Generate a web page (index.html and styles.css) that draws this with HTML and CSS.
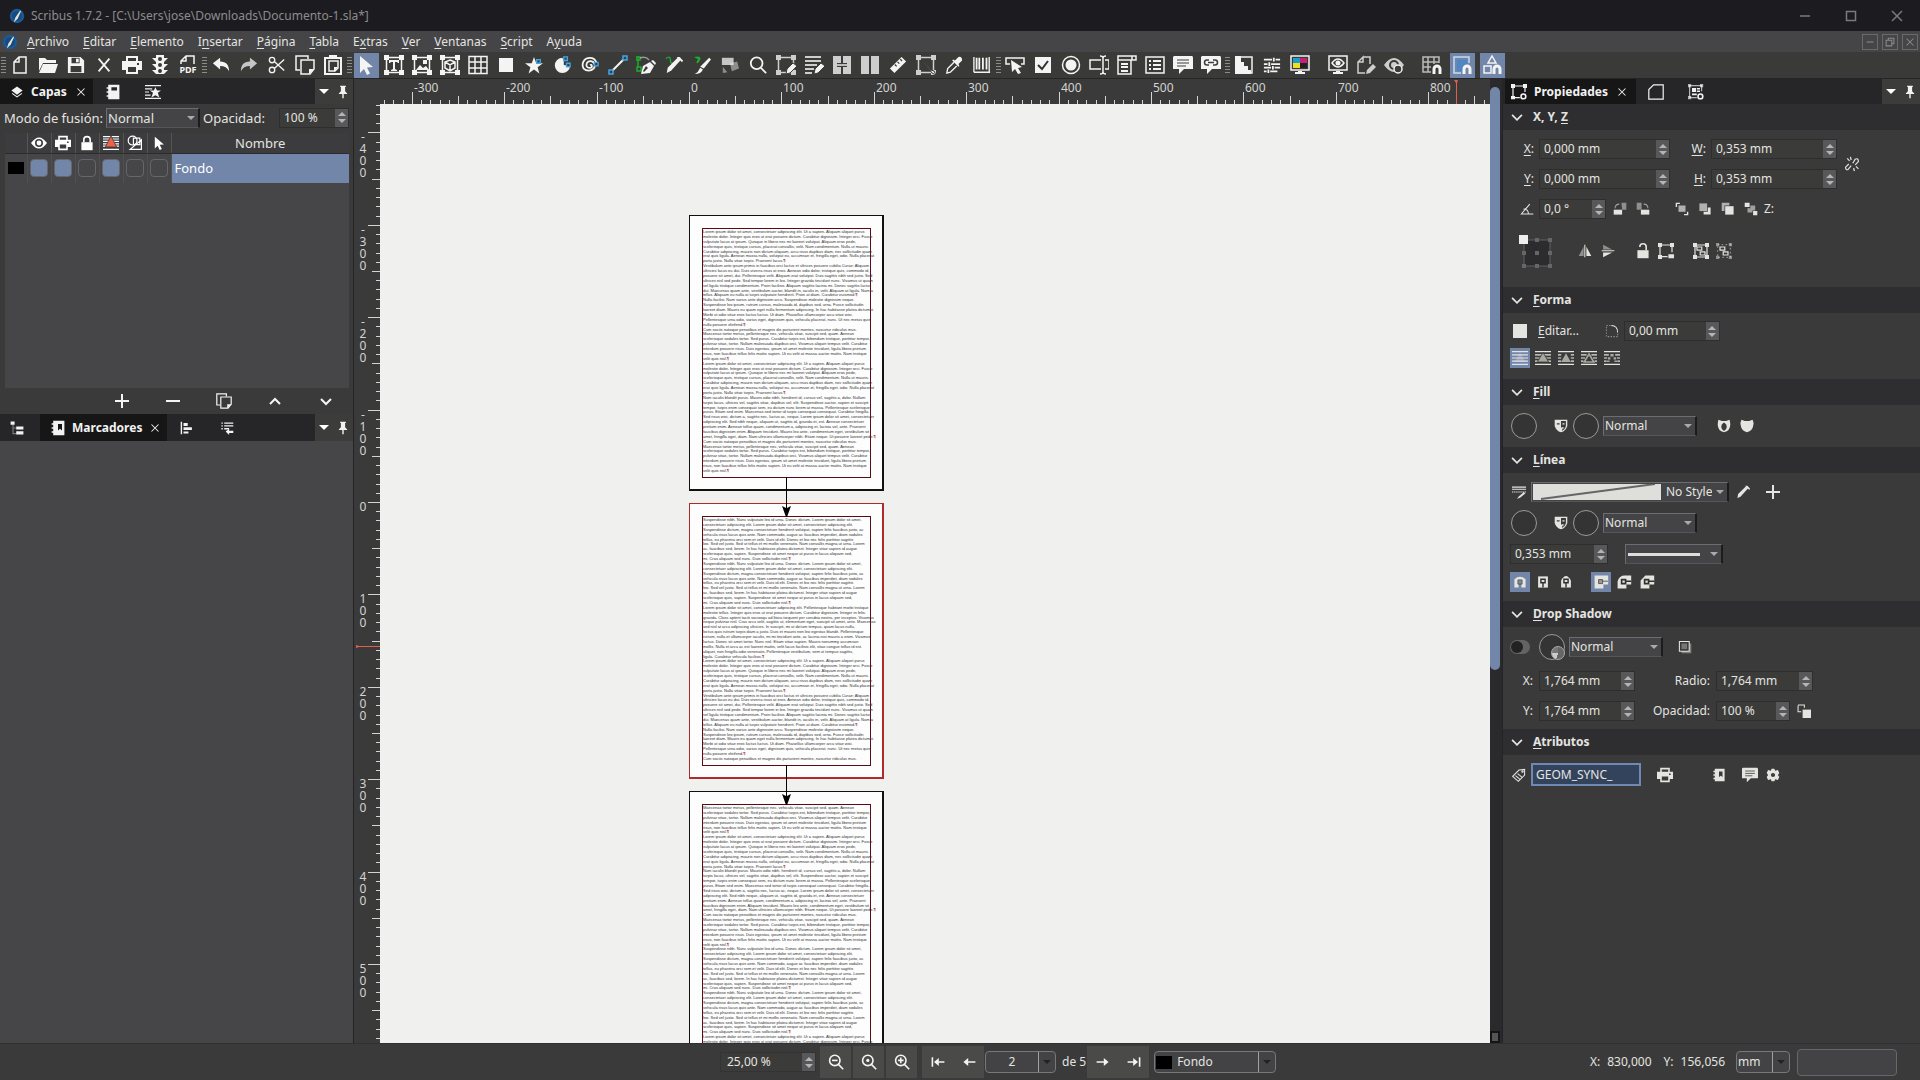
FILE: index.html
```html
<!DOCTYPE html>
<html lang="es">
<head>
<meta charset="utf-8">
<title>Scribus 1.7.2</title>
<link rel="stylesheet" href="styles.css">
</head>
<body>
<svg class="sprite" aria-hidden="true">
  <symbol id="logo" viewBox="0 0 20 20"><circle cx="10" cy="10" r="9" fill="#1b5a96"/><circle cx="10" cy="10" r="6" fill="#174a80"/><path d="M14 3L8 12l-2 6 5-5 4-9z" fill="#e8e4d0"/></symbol>
  <symbol id="new" viewBox="0 0 20 20"><path class="s" d="M9 2h7v16H4V7zM9 2v5H4"/></symbol>
  <symbol id="open" viewBox="0 0 20 20"><path d="M1 3h6l2 2h9v3H5L1 16zM5 9h15l-3 9H1z"/></symbol>
  <symbol id="save" viewBox="0 0 20 20"><path fill-rule="evenodd" d="M1 1h14l4 4v14H1zM5 2v6h9V2zM4 11v7h12v-7z"/><path d="M10 3h3v4h-3z"/></symbol>
  <symbol id="close" viewBox="0 0 20 20"><path class="s2" d="M4 3l12 14M16 3L4 17"/></symbol>
  <symbol id="print" viewBox="0 0 20 20"><path fill-rule="evenodd" d="M4 1h12v5h4v9h-4v4H4v-4H0V6h4zM6 3v3h8V3zM6 12v5h8v-5zM15 8v2h2V8z"/></symbol>
  <symbol id="lights" viewBox="0 0 20 20"><path fill-rule="evenodd" d="M6 0h8v3h4l-4 4v2h4l-4 4v2h4l-4 4H6l-4-4h4v-2L2 9h4V7L2 3h4zM10 2a2 2 0 100 4 2 2 0 000-4zM10 8a2 2 0 100 4 2 2 0 000-4zM10 14a2 2 0 100 4 2 2 0 000-4z"/></symbol>
  <symbol id="pdf" viewBox="0 0 20 20"><path class="s" d="M3 9V6l5-5h8v8M8 1v5H3"/><text x="10" y="18" font-size="9" font-weight="700" text-anchor="middle">PDF</text></symbol>
  <symbol id="undo" viewBox="0 0 20 20"><path d="M1 8l8-6v4c7 0 10 4 10 11-2-4-5-6-10-6v4z"/></symbol>
  <symbol id="redo" viewBox="0 0 20 20"><path opacity=".75" d="M19 8l-8-6v4C4 6 1 10 1 17c2-4 5-6 10-6v4z"/></symbol>
  <symbol id="cut" viewBox="0 0 20 20"><path class="s" d="M7 6l11 10M7 14L18 4"/><circle class="s" cx="4.500" cy="4.500" r="3"/><circle class="s" cx="4.500" cy="15.500" r="3"/></symbol>
  <symbol id="copy" viewBox="0 0 20 20"><path class="s" d="M5 15H1V1h12v3M6 5h13v9l-4 5H6z"/><path d="M19 14h-5v5z"/></symbol>
  <symbol id="paste" viewBox="0 0 20 20"><path class="s2" d="M2 3h16v16H2z"/><path d="M6 0h8v4H6z"/><path class="s" d="M6 6h9v7l-3 3H6z"/><path d="M15 12h-4v5z"/></symbol>
  <symbol id="arrow" viewBox="0 0 20 20"><path d="M4 1l13 11-6 .5 3 6-3 1.500-3-6-4 4z"/></symbol>
  <symbol id="frame" viewBox="0 0 20 20"><path class="s" d="M2.500 2.500h15v15h-15z"/><path d="M0 0h5v5H0zM15 0h5v5h-5zM0 15h5v5H0zM15 15h5v5h-5z"/></symbol>
  <symbol id="text" viewBox="0 0 20 20"><use href="#frame"/><path d="M5 5h10v3h-1l-1-1h-2v7l2 1v1H7v-1l2-1V7H7L6 8H5z"/></symbol>
  <symbol id="image" viewBox="0 0 20 20"><use href="#frame"/><path d="M4 15l4-5 3 3 3-2 3 4zM11 5h4v4h-4z"/></symbol>
  <symbol id="render" viewBox="0 0 20 20"><use href="#frame"/><path class="s" d="M10 5l5 2v6l-5 3-5-3V7zM5 7l5 3 5-3M10 10v6"/></symbol>
  <symbol id="table" viewBox="0 0 20 20"><path class="s" d="M1 1.500h18v17H1zM1 7h18M1 13h18M7 1v18M13 1v18"/></symbol>
  <symbol id="square" viewBox="0 0 20 20"><path d="M3 3h14v14H3z"/></symbol>
  <symbol id="star" viewBox="0 0 20 20"><path d="M10 1l2.500 7H20l-6 4.500 2 7-6-4.500-6 4.500 2-7L0 8h7.500z"/><path class="b" d="M13 4h4v4h-4z"/></symbol>
  <symbol id="pie" viewBox="0 0 20 20"><path d="M10 2a8.500 8.500 0 109 9l-7-1V4z"/><path class="b" d="M12 1h4v4h-4zM15 8h4v4h-4z"/></symbol>
  <symbol id="spiral" viewBox="0 0 20 20"><path class="s2" d="M10 10c2-1 3 2 1 3-3 1-5-1-5-3 0-3 3-5 6-4 4 1 4 6 2 8-3 3-8 3-11 0-3-5 0-12 7-12 3 0 6 2 7 5"/><path class="b" d="M15 7h4v4h-4z"/></symbol>
  <symbol id="line" viewBox="0 0 20 20"><path class="s2" d="M4 16L16 4"/><path class="b" d="M15 1h4v4h-4zM1 15h4v4H1z"/></symbol>
  <symbol id="pen" viewBox="0 0 20 20"><path class="g" d="M2 1v11M1 12h4v4H1zM0 2h4v3H0z"/><path class="s" opacity=".5" d="M4 3q6-2 9 2"/><path fill-rule="evenodd" d="M5 19l2-8 7-4 4 4-4 7zM10 11l2 2-4 4-1-1z"/><path d="M15 6l4 4 1-2-3-3z"/></symbol>
  <symbol id="pencil" viewBox="0 0 20 20"><path d="M2 19l1-6L14 2q3-2 4 2L7 16z"/><path d="M13 1l6 6 1-2-4-4z"/></symbol>
  <symbol id="freehand" viewBox="0 0 20 20"><path class="g" d="M1 3q5-4 5 1t3 4"/><use href="#pencil"/></symbol>
  <symbol id="brush" viewBox="0 0 20 20"><path fill="#1faa2e" d="M1 1q9-2 7 3t-4 4q0-4 2-4z"/><path d="M18 2l2 2-8 10-4-2zM8 13l3 2q-2 5-9 5 4-2 6-7z"/></symbol>
  <symbol id="rotate" viewBox="0 0 20 20"><path opacity=".75" d="M1 2h13v8H1z"/><path opacity=".45" d="M10 8l8-2 2 8-8 3zM2 12l5 6-5 1z"/></symbol>
  <symbol id="zoom" viewBox="0 0 20 20"><circle class="s2" cx="8.500" cy="8" r="6.500"/><path class="s2" d="M13 13l6 6"/></symbol>
  <symbol id="editframe" viewBox="0 0 20 20"><use href="#frame" opacity=".8"/><path stroke="#3c3c3c" d="M10 19l1-5 6-6 4 3-7 7z"/></symbol>
  <symbol id="story" viewBox="0 0 20 20"><path class="s2" d="M1 2h16M1 6h16M1 10h12M1 14h9M1 18h7" opacity=".8"/><path stroke="#3c3c3c" d="M10 19l1-5 6-6 4 3-7 7z"/></symbol>
  <symbol id="link" viewBox="0 0 20 20"><path opacity=".8" d="M1 1h8v7H5v4h4v7H1zM11 1h8v18h-8v-7h4V8h-4z"/><path opacity=".7" d="M5 9h10v2H5z"/></symbol>
  <symbol id="unlink" viewBox="0 0 20 20"><path opacity=".8" d="M1 1h8v18H1zM11 1h8v18h-8z"/></symbol>
  <symbol id="ruler" viewBox="0 0 20 20"><path fill-rule="evenodd" d="M1 14L14 1l5 5L6 19zM6 10l2 2 1-1-2-2zM9 7l2 2 1-1-2-2zM12 4l2 2 1-1-2-2z"/></symbol>
  <symbol id="props" viewBox="0 0 20 20"><use href="#frame" opacity=".8"/><path stroke="#3c3c3c" d="M7 6l8 9 3 1 2 4-4-2-2-3z"/></symbol>
  <symbol id="dropper" viewBox="0 0 20 20"><path d="M11 5l4-4q4-1 4 4l-4 4 1 2-1 1-7-7 1-1z"/><path class="s" d="M10 7l-7 7-1 5 4-1 7-7"/></symbol>
  <symbol id="barcode" viewBox="0 0 20 20"><path class="s2" d="M4 2v13M7 2v13M11 2v13M15 2v13"/><path class="s" d="M1 1v17M18 1v17M1 18h18"/></symbol>
  <symbol id="pushbtn" viewBox="0 0 20 20"><path class="s" d="M5 9H1V3h18v6h-3"/><path d="M6 5l11 7-4 1 3 5-3 1-3-5-3 3z"/></symbol>
  <symbol id="check" viewBox="0 0 20 20"><path d="M2 2h16v16H2z"/><path fill="none" stroke="#303030" stroke-width="2" d="M5 10l4 4 6-8"/></symbol>
  <symbol id="radio" viewBox="0 0 20 20"><circle class="s" cx="10" cy="10" r="8.500"/><circle cx="10" cy="10" r="5.500"/></symbol>
  <symbol id="field" viewBox="0 0 20 20"><path class="s" d="M12 5H1v9h11M16 5h4v9h-4M14 2v16M11 1q3 0 3 2 0-2 3-2M11 19q3 0 3-2 0 2 3 2"/></symbol>
  <symbol id="combo" viewBox="0 0 20 20"><path class="s" d="M1 1h18v4H1zM1 5h13v14H1zM15 1v4"/><path class="s2" d="M4 9h7M4 12h7M4 16h7"/></symbol>
  <symbol id="list" viewBox="0 0 20 20"><path class="s" d="M1 2h18v16H1z"/><path class="s2" d="M4 6h2M8 6h8M4 10h2M8 10h8M4 14h2M8 14h8"/></symbol>
  <symbol id="note" viewBox="0 0 20 20"><path d="M1 1h18q1 0 1 2v11h-9l-5 5v-5H0V2z"/><path stroke="#3c3c3c" d="M4 5h12M4 8h12M4 11h9"/></symbol>
  <symbol id="noteln" viewBox="0 0 20 20"><path d="M1 1h18q1 0 1 2v11h-9l-5 5v-5H0V2z"/><path fill="none" stroke="#3c3c3c" stroke-width="1.500" d="M8 5H6a2 2 0 000 5h2M12 5h2a2 2 0 010 5h-2M7 7.500h6"/></symbol>
  <symbol id="contour" viewBox="0 0 20 20"><path class="s" d="M2 2h16v16H2z"/><path d="M1 1h6v6h3v4h4v4h3v4H1z"/></symbol>
  <symbol id="sliders" viewBox="0 0 20 20"><path class="s2" d="M1 4h9M14 4h5M1 9h4M9 9h10M1 13h8M13 13h6M1 17h3M8 17h8M12 2v4M7 7v4M11 11v4M6 15v4"/></symbol>
  <symbol id="cmyk" viewBox="0 0 20 20"><path class="s" d="M1 1h18v14H1z"/><path fill="#14a0c8" d="M3 3h7v5H3z"/><path fill="#c81e78" d="M10 3h7v5h-7z"/><path fill="#f0e020" d="M3 8h7v5H3z"/><path fill="#202020" d="M10 8h7v5h-7z"/><path d="M8 16h4v1h3v2H5v-2h3z"/></symbol>
  <symbol id="eye" viewBox="0 0 20 20"><path fill-rule="evenodd" d="M0 10q10-14 20 0-10 14-20 0zM10 5a5 5 0 100 10 5 5 0 000-10z"/><circle cx="10" cy="10" r="3"/></symbol>
  <symbol id="preview" viewBox="0 0 20 20"><path class="s" d="M1 1h18v14H1zM4 8q6-8 12 0-6 8-12 0z"/><circle cx="10" cy="8" r="2.500"/><path d="M8 16h4v1h3v2H5v-2h3z"/></symbol>
  <symbol id="editpage" viewBox="0 0 20 20"><path class="s" opacity=".8" d="M7 2h7v7M9 18H2V7l5-5v5H2"/><path opacity=".8" d="M10 19l1-4 6-6 3 3-6 6z"/></symbol>
  <symbol id="eyeedit" viewBox="0 0 20 20"><use href="#eye" opacity=".8"/><circle cx="14" cy="14" r="4.500" fill="#3c3c3c"/><circle class="s" cx="14" cy="14" r="4"/></symbol>
  <symbol id="magnet" viewBox="0 0 20 20"><path fill="none" stroke="currentColor" stroke-width="3" d="M12 19v-5a3 3 0 016 0v5"/></symbol>
  <symbol id="snapgrid" viewBox="0 0 20 20"><path class="s" opacity=".7" d="M9 17H1V2h16v6M1 7h16M1 12h8M6 2v15M12 2v7"/><use href="#magnet"/></symbol>
  <symbol id="snapguide" viewBox="0 0 20 20"><path fill="#4f86c4" d="M5 5h10v5l-5 6H5z"/><path fill="none" stroke="#c4dcf4" stroke-width="1.500" d="M9 18H2V2h15v6"/><use href="#magnet"/></symbol>
  <symbol id="snapobj" viewBox="0 0 20 20"><path class="s" d="M10 1l4 7H6zM2 11h7v7H2z"/><use href="#magnet"/></symbol>
  <symbol id="layers" viewBox="0 0 20 20"><path d="M10 2l8 6-8 6-8-6z"/><path class="s" d="M3 12l7 5 7-5"/></symbol>
  <symbol id="book" viewBox="0 0 20 20"><path fill-rule="evenodd" d="M4 1h14v18H4v-3H2v-2h2v-3H2V9h2V6H2V4h2zM8 4v4h7V4z"/></symbol>
  <symbol id="bookmark" viewBox="0 0 20 20"><path fill-rule="evenodd" d="M4 1h14v18H4v-3H2v-2h2v-3H2V9h2V6H2V4h2zM10 5v8l2.500-2 2.500 2V5z"/></symbol>
  <symbol id="styles" viewBox="0 0 20 20"><path class="s" d="M0 2h20M0 6h9M0 10h5M0 14h7M0 18h20"/><path d="M13 4l2 4h5l-4 3 2 6-5-3-5 3 2-6-4-3h5z"/></symbol>
  <symbol id="pin" viewBox="0 0 20 20"><path d="M6 1h8v2h-1v6l3 3v1h-5v6H9v-6H4v-1l3-3V3H6z"/></symbol>
  <symbol id="lock" viewBox="0 0 20 20"><path d="M3 9h14v10H3z"/><path class="s2" d="M6 9V6a4 4 0 018 0v3"/></symbol>
  <symbol id="unlock" viewBox="0 0 20 20"><path d="M3 9h14v10H3z"/><path class="s2" d="M6 5a4 4 0 018 0v4"/></symbol>
  <symbol id="flowred" viewBox="0 0 20 20"><path class="s" d="M0 2h20M0 5h20M0 8h20M0 11h20M0 14h20M0 18h20"/><path fill="#f0604a" stroke="#3c3c3e" d="M10 1l7 14H3z"/></symbol>
  <symbol id="flow" viewBox="0 0 20 20"><path class="s" d="M0 2h20M0 6h20M0 10h20M0 14h20M0 18h20"/><path fill="#a8a8a0" stroke="#3a3a3a" d="M10 3l7 12H3z"/></symbol>
  <symbol id="flowoff" viewBox="0 0 20 20"><path fill="#98a0b8" d="M10 3l7 12H3z"/><path class="s" d="M0 2h20M0 6h20M0 10h20M0 14h20M0 18h20"/></symbol>
  <symbol id="flow2" viewBox="0 0 20 20"><path class="s" d="M0 2h20M0 6h4M16 6h4M0 10h4M16 10h4M0 14h4M16 14h4M0 18h20"/><path fill="#a8a8a0" d="M10 4l6 11H4z"/></symbol>
  <symbol id="flow3" viewBox="0 0 20 20"><path class="s" d="M0 2h20M0 6h7M13 6h7M0 10h5M15 10h5M0 14h3M17 14h3M0 18h20"/><path fill="none" stroke="#a8a8a0" stroke-width="2" d="M10 5l6 10H4z"/></symbol>
  <symbol id="flow4" viewBox="0 0 20 20"><path class="s" d="M0 2h20M0 6h6M14 6h6M0 10h4M16 10h4M0 14h3M17 14h3M0 18h20"/><path fill="#a8a8a0" d="M8 5h4v3H8zM5 9h3v3H5zM12 9h3v3h-3zM3 13h4v2H3zM13 13h4v2h-4z"/></symbol>
  <symbol id="outline" viewBox="0 0 20 20"><circle class="s" cx="7" cy="7" r="5.500"/><path class="s" d="M8 4h8v8H8zM4 18h14V6z"/></symbol>
  <symbol id="plus" viewBox="0 0 20 20"><path class="s2" d="M10 3v14M3 10h14"/></symbol>
  <symbol id="minus" viewBox="0 0 20 20"><path class="s2" d="M3 10h14"/></symbol>
  <symbol id="up" viewBox="0 0 20 20"><path class="s2" d="M5 13l5-5 5 5"/></symbol>
  <symbol id="down" viewBox="0 0 20 20"><path class="s2" d="M5 8l5 5 5-5"/></symbol>
  <symbol id="chev" viewBox="0 0 20 20"><path fill="none" stroke="currentColor" stroke-width="2.500" d="M3 7l7 7 7-7"/></symbol>
  <symbol id="tree" viewBox="0 0 20 20"><path d="M2 2h5v4H2zM9 8h9v4H9zM9 14h9v4H9z"/><path class="s" opacity=".4" d="M5 6v11h4M5 10h4"/></symbol>
  <symbol id="align" viewBox="0 0 20 20"><path d="M1 1h2v18H1zM5 3h6v4H5zM5 9h12v4H5zM5 15h7v3H5z"/></symbol>
  <symbol id="indent" viewBox="0 0 20 20"><path class="s2" d="M2 3h2M6 3h13M2 7h2M6 7h13M2 11h2M6 11h7"/><path d="M8 15l5-4v3h6v3h-6v3z"/></symbol>
  <symbol id="gearframe" viewBox="0 0 20 20"><path class="s" d="M2.500 17V2.500h15V10M3 17h8"/><path d="M0 0h5v5H0zM15 0h5v5h-5zM0 15h5v4H0z"/><circle cx="15.500" cy="15.500" r="3" fill="none" stroke="currentColor" stroke-width="2"/></symbol>
  <symbol id="page" viewBox="0 0 20 20"><path class="s" d="M7 1h12v18H1V7z"/></symbol>
  <symbol id="textprops" viewBox="0 0 20 20"><path class="s" opacity=".7" d="M2 17V2h15v7M2 17h9"/><path opacity=".7" d="M0 0h4v4H0zM15 0h4v4h-4zM0 15h4v4H0z"/><path d="M5 5h5v5H5zM11 5h4v2h-4zM11 8h4v2h-4zM5 12h6v2H5z"/><circle cx="15.500" cy="15.500" r="3" fill="none" stroke="currentColor" stroke-width="2"/></symbol>
  <symbol id="broken" viewBox="0 0 20 20"><path class="s" d="M9 12l-4 5q-3 1-3-3l4-4M11 9l3-5q4-2 4 3l-4 4M4 3l3 3M8 1l1 4M12 15l1 4M15 13l3 3"/></symbol>
  <symbol id="angle" viewBox="0 0 20 20"><path class="s" d="M14 3L2 17h17M5 10q7 0 7 7"/></symbol>
  <symbol id="rotl" viewBox="0 0 20 20"><path d="M1 11h12v7H1z"/><path opacity=".5" d="M12 1h7v10h-6z"/><path class="s" opacity=".6" d="M3 9q0-6 6-6"/></symbol>
  <symbol id="rotr" viewBox="0 0 20 20"><path d="M7 11h12v7H7z"/><path opacity=".5" d="M1 1h7v10H1z"/><path class="s" opacity=".6" d="M17 9q0-6-6-6"/></symbol>
  <symbol id="z1" viewBox="0 0 20 20"><path d="M1 1h6v2H3v4H1zM13 17h4v-3h2v5h-6z"/><path opacity=".7" d="M5 5h10v9H5z"/></symbol>
  <symbol id="z2" viewBox="0 0 20 20"><path d="M14 8h4v10H8v-4h6z"/><path opacity=".7" d="M2 2h11v11H2z"/></symbol>
  <symbol id="z3" viewBox="0 0 20 20"><path opacity=".7" d="M1 1h11v4H5v8H1z"/><path d="M6 6h12v12H6z"/></symbol>
  <symbol id="z4" viewBox="0 0 20 20"><path d="M1 1h7v6H1zM13 13h6v6h-6z"/><path opacity=".6" d="M9 5h7v7h-4v3H5V9h4z"/></symbol>
  <symbol id="refpoint" viewBox="0 0 34 34"><path fill="#2c2c2e" stroke="#606060" d="M6 6h26v26H6z"/><path fill="#666" d="M17 4h4v4h-4zM30 4h4v4h-4zM4 17h4v4H4zM17 17h4v4h-4zM30 17h4v4h-4zM4 30h4v4H4zM17 30h4v4h-4zM30 30h4v4h-4z"/><path fill="#eee" d="M1 1h9v9H1z"/></symbol>
  <symbol id="fliph" viewBox="0 0 20 20"><path opacity=".5" d="M8 4v13H1z"/><path d="M12 4v13h7zM9 1h1.500v18H9z"/></symbol>
  <symbol id="flipv" viewBox="0 0 20 20"><path opacity=".5" d="M3 8h13L3 1z"/><path d="M3 12h13L3 19zM1 9h18v1.500H1z"/></symbol>
  <symbol id="locksize" viewBox="0 0 20 20"><path class="s" d="M2.500 2.500h15v9M2.500 3v14H12"/><path d="M0 0h5v5H0zM15 0h5v5h-5zM0 15h5v5H0zM13 14h7v5h-7z"/></symbol>
  <symbol id="group" viewBox="0 0 20 20"><use href="#frame"/><path class="s" d="M5 5h6v4H5zM9 11h6v4H9z"/></symbol>
  <symbol id="ungroup" viewBox="0 0 20 20"><path opacity=".5" d="M0 0h4v4H0zM16 0h4v4h-4zM0 16h4v4H0zM16 16h4v4h-4z"/><path class="s" opacity=".5" stroke-dasharray="2 3" d="M2 2h16v16H2z"/><path class="s" d="M5 5h6v4H5zM9 11h6v4H9z"/></symbol>
  <symbol id="corner" viewBox="0 0 20 20"><path class="s" opacity=".5" stroke-dasharray="2 2" d="M8 2H2v16h16v-6"/><path class="s" d="M9 2q9 0 9 10"/></symbol>
  <symbol id="mask" viewBox="0 0 20 20"><path d="M1 1h18v9q-2 7-9 9-7-2-9-9z"/><path fill="#3a3a3a" d="M4 6h4v2H4zM10 3h7v7q-1 5-6 7l2-5h-3z"/><path d="M12 6h3v2h-3zM11 12h4l-2 2z"/></symbol>
  <symbol id="ringmask" viewBox="0 0 20 20"><path fill-rule="evenodd" d="M2 1l5 2h6l5-2q1 4 1 7 0 9-9 11Q1 17 1 8q0-3 1-7zM10 5q-4 2-4 6t4 6q4-2 4-6t-4-6z"/></symbol>
  <symbol id="solidmask" viewBox="0 0 20 20"><path d="M2 1l5 2h6l5-2q2 4 1 8-1 8-9 10Q2 17 1 9q-1-4 1-8z"/></symbol>
  <symbol id="linestyle" viewBox="0 0 20 20"><path class="s" d="M0 3h20M0 6h20"/><path class="s" stroke-dasharray="2 1" d="M0 10h20"/><path d="M17 10l2 2-7 6-5 2 3-4z"/></symbol>
  <symbol id="cap1" viewBox="0 0 20 20"><path fill-rule="evenodd" d="M2 18V6q8-7 16 0v12h-6v-5H8v5z"/><path fill="#8a8a8a" stroke="#444" d="M7 7h6v6H7z"/></symbol>
  <symbol id="cap2" viewBox="0 0 20 20"><path d="M3 2h14v16H3z"/><path fill="#ddd" stroke="#303030" stroke-width="2" d="M7 6h6v5H7zM10 11v7"/></symbol>
  <symbol id="cap3" viewBox="0 0 20 20"><path d="M3 18V8q7-13 14 0v10z"/><path fill="#ddd" stroke="#303030" stroke-width="2" d="M7 6h6v5H7zM10 11v7"/></symbol>
  <symbol id="join1" viewBox="0 0 20 20"><path d="M2 2h17v11h-6v5H2z"/><path fill="#999" stroke="#444" d="M7 7h5v5H7zM12 9h7"/></symbol>
  <symbol id="join2" viewBox="0 0 20 20"><path d="M2 18V9q2-7 9-7h8v11h-6v5z"/><path fill="#ddd" stroke="#303030" stroke-width="2" d="M7 7h5v5H7zM12 9h7"/></symbol>
  <symbol id="join3" viewBox="0 0 20 20"><path d="M2 18V8l6-6h11v11h-6v5z"/><path fill="#ddd" stroke="#303030" stroke-width="2" d="M7 7h5v5H7zM12 9h7"/></symbol>
  <symbol id="toggle" viewBox="0 0 20 20"><rect x="0" y="3" width="20" height="14" rx="7" fill="#636363"/><circle cx="7" cy="10" r="6" fill="#222"/></symbol>
  <symbol id="shadow" viewBox="0 0 20 20"><path opacity=".4" d="M5 5h14v14H5z"/><path stroke="currentColor" stroke-width="1.500" fill="#3a3a3a" d="M2 2h14v14H2z"/><path fill="#777" d="M5 5h8v8H5z"/></symbol>
  <symbol id="knock" viewBox="0 0 20 20"><path class="s" d="M1.500 1.500h9v4M6 11H1.500v-9"/><path d="M8 8h12v12H8z"/></symbol>
  <symbol id="tag" viewBox="0 0 20 20"><path class="s" d="M10 3l8-1v8l-9 9-8-7zM5 11l6 5M8 8l6 5"/><circle class="s" cx="15" cy="5" r="1"/></symbol>
  <symbol id="gear" viewBox="0 0 20 20"><path fill-rule="evenodd" d="M8 1h4l1 3 4-1 2 4-2 3 2 3-2 4-4-1-1 3H8l-1-3-4 1-2-4 2-3-2-3 2-4 4 1zM10 7a3 3 0 100 6 3 3 0 000-6z"/></symbol>
  <symbol id="zoomout" viewBox="0 0 20 20"><use href="#zoom"/><path class="s2" d="M5 8h7"/></symbol>
  <symbol id="zoomone" viewBox="0 0 20 20"><use href="#zoom"/><circle cx="8.500" cy="8" r="2"/></symbol>
  <symbol id="zoomin" viewBox="0 0 20 20"><use href="#zoom"/><path class="s2" d="M5 8h7M8.500 4.500v7"/></symbol>
  <symbol id="prev" viewBox="0 0 20 20"><path d="M3 10l6-5v4h9v2H9v4z"/></symbol>
  <symbol id="next" viewBox="0 0 20 20"><path d="M17 10l-6-5v4H2v2h9v4z"/></symbol>
  <symbol id="first" viewBox="0 0 20 20"><path d="M2 4h2v12H2zM5 10l6-5v4h7v2h-7v4z"/></symbol>
  <symbol id="last" viewBox="0 0 20 20"><path d="M16 4h2v12h-2zM15 10L9 5v4H2v2h7v4z"/></symbol>
  <symbol id="minimize" viewBox="0 0 20 20"><path class="s" d="M5 10h10"/></symbol>
  <symbol id="maximize" viewBox="0 0 20 20"><path class="s" d="M5.500 5.500h9v9h-9z"/></symbol>
  <symbol id="restore" viewBox="0 0 20 20"><path class="s" d="M4.500 7.500h8v8h-8zM7.500 7V4.500h8v8H13"/></symbol>
  <symbol id="x" viewBox="0 0 20 20"><path class="s" d="M5 5l10 10M15 5L5 15"/></symbol>
</svg>

<header class="titlebar">
  <svg class="i16"><use href="#logo"/></svg>
  <h1>Scribus 1.7.2 - [C:\Users\jose\Downloads\Documento-1.sla*]</h1>
  <div class="wincontrols">
    <button aria-label="Minimizar"><svg class="i20"><use href="#minimize"/></svg></button>
    <button aria-label="Maximizar"><svg class="i20"><use href="#maximize"/></svg></button>
    <button aria-label="Cerrar"><svg class="i20"><use href="#x"/></svg></button>
  </div>
</header>

<nav class="menubar">
  <svg class="i16"><use href="#logo"/></svg>
  <button><u>A</u>rchivo</button><button><u>E</u>ditar</button><button><u>E</u>lemento</button><button>I<u>n</u>sertar</button><button><u>P</u>ágina</button><button><u>T</u>abla</button><button>E<u>x</u>tras</button><button><u>V</u>er</button><button><u>V</u>entanas</button><button><u>S</u>cript</button><button>A<u>y</u>uda</button>
  <div class="subcontrols">
    <button aria-label="Minimizar documento"><svg class="i14"><use href="#minimize"/></svg></button>
    <button aria-label="Restaurar documento"><svg class="i14"><use href="#restore"/></svg></button>
    <button aria-label="Cerrar documento"><svg class="i14"><use href="#x"/></svg></button>
  </div>
</nav>

<div class="toolbar" role="toolbar">
  <span class="handle"></span>
  <button aria-label="Nuevo"><svg class="i20"><use href="#new"/></svg></button>
  <button aria-label="Abrir"><svg class="i20"><use href="#open"/></svg></button>
  <button aria-label="Guardar"><svg class="i18"><use href="#save"/></svg></button>
  <button aria-label="Cerrar"><svg class="i18"><use href="#close"/></svg></button>
  <button aria-label="Imprimir"><svg class="i20"><use href="#print"/></svg></button>
  <button aria-label="Verificar"><svg class="i20"><use href="#lights"/></svg></button>
  <button aria-label="Exportar PDF"><svg class="i20"><use href="#pdf"/></svg></button>
  <span class="handle"></span>
  <button aria-label="Deshacer"><svg class="i18"><use href="#undo"/></svg></button>
  <button aria-label="Rehacer"><svg class="i18"><use href="#redo"/></svg></button>
  <button aria-label="Cortar"><svg class="i18"><use href="#cut"/></svg></button>
  <button aria-label="Copiar"><svg class="i20"><use href="#copy"/></svg></button>
  <button aria-label="Pegar"><svg class="i20"><use href="#paste"/></svg></button>
  <span class="handle"></span>
  <button class="on" aria-label="Seleccionar"><svg class="i20"><use href="#arrow"/></svg></button>
  <button aria-label="Marco de texto"><svg class="i20"><use href="#text"/></svg></button>
  <button aria-label="Marco de imagen"><svg class="i20"><use href="#image"/></svg></button>
  <button aria-label="Marco de render"><svg class="i20"><use href="#render"/></svg></button>
  <button aria-label="Tabla"><svg class="i20"><use href="#table"/></svg></button>
  <button aria-label="Forma"><svg class="i20"><use href="#square"/></svg></button>
  <button aria-label="Polígono"><svg class="i18"><use href="#star"/></svg></button>
  <button aria-label="Arco"><svg class="i18"><use href="#pie"/></svg></button>
  <button aria-label="Espiral"><svg class="i18"><use href="#spiral"/></svg></button>
  <button aria-label="Línea"><svg class="i20"><use href="#line"/></svg></button>
  <button aria-label="Bézier"><svg class="i20"><use href="#pen"/></svg></button>
  <button aria-label="Mano alzada"><svg class="i18"><use href="#freehand"/></svg></button>
  <button aria-label="Caligrafía"><svg class="i18"><use href="#brush"/></svg></button>
  <button aria-label="Rotar"><svg class="i18"><use href="#rotate"/></svg></button>
  <button aria-label="Zoom"><svg class="i18"><use href="#zoom"/></svg></button>
  <button aria-label="Editar marco"><svg class="i20"><use href="#editframe"/></svg></button>
  <button aria-label="Editor de texto"><svg class="i20"><use href="#story"/></svg></button>
  <button aria-label="Enlazar"><svg class="i20"><use href="#link"/></svg></button>
  <button aria-label="Desenlazar"><svg class="i20"><use href="#unlink"/></svg></button>
  <button aria-label="Medir"><svg class="i18"><use href="#ruler"/></svg></button>
  <button aria-label="Copiar propiedades"><svg class="i20"><use href="#props"/></svg></button>
  <button aria-label="Cuentagotas"><svg class="i18"><use href="#dropper"/></svg></button>
  <button aria-label="Código de barras"><svg class="i18"><use href="#barcode"/></svg></button>
  <span class="handle"></span>
  <button aria-label="Botón PDF"><svg class="i20"><use href="#pushbtn"/></svg></button>
  <button aria-label="Casilla PDF"><svg class="i20"><use href="#check"/></svg></button>
  <button aria-label="Radio PDF"><svg class="i20"><use href="#radio"/></svg></button>
  <button aria-label="Campo PDF"><svg class="i20"><use href="#field"/></svg></button>
  <button aria-label="Combo PDF"><svg class="i20"><use href="#combo"/></svg></button>
  <button aria-label="Lista PDF"><svg class="i20"><use href="#list"/></svg></button>
  <button aria-label="Nota PDF"><svg class="i20"><use href="#note"/></svg></button>
  <button aria-label="Enlace PDF"><svg class="i20"><use href="#noteln"/></svg></button>
  <span class="handle"></span>
  <button aria-label="Contorno"><svg class="i20"><use href="#contour"/></svg></button>
  <button aria-label="Ajustes de imagen"><svg class="i18"><use href="#sliders"/></svg></button>
  <button aria-label="Gestión de color"><svg class="i20"><use href="#cmyk"/></svg></button>
  <button class="apart" aria-label="Vista previa"><svg class="i20"><use href="#preview"/></svg></button>
  <button aria-label="Editar en vista previa"><svg class="i20"><use href="#editpage"/></svg></button>
  <button aria-label="Simulación"><svg class="i20"><use href="#eyeedit"/></svg></button>
  <button class="apart" aria-label="Ajustar a rejilla"><svg class="i20"><use href="#snapgrid"/></svg></button>
  <button class="on wide" aria-label="Ajustar a guías"><svg class="i20"><use href="#snapguide"/></svg></button>
  <button class="on wide" aria-label="Ajustar a objetos"><svg class="i20"><use href="#snapobj"/></svg></button>
</div>

<main class="workspace">
  <aside class="left">
    <section class="layers">
      <div class="tabs">
        <div class="tab active"><svg class="i14"><use href="#layers"/></svg>Capas<svg class="i14"><use href="#x"/></svg></div>
        <div class="tab"><svg class="i16"><use href="#book"/></svg></div>
        <div class="tab"><svg class="i16"><use href="#styles"/></svg></div>
        <div class="dock"><span class="tri"></span><svg class="i14"><use href="#pin"/></svg></div>
      </div>
      <div class="blend">
        <label for="mode">Modo de fusión:</label>
        <span class="select w94"><select id="mode"><option>Normal</option></select></span>
        <label for="op">Opacidad:</label>
        <span class="spin w70"><input id="op" value="100 %"><i class="steps"></i></span>
      </div>
      <div class="layerlist">
        <table>
          <thead><tr><th class="color"></th>
            <th><svg class="i16"><use href="#eye"/></svg></th>
            <th><svg class="i16"><use href="#print"/></svg></th>
            <th><svg class="i16"><use href="#lock"/></svg></th>
            <th><svg class="i16"><use href="#flowred"/></svg></th>
            <th><svg class="i16"><use href="#outline"/></svg></th>
            <th><svg class="i14"><use href="#arrow"/></svg></th>
            <th class="name">Nombre</th></tr></thead>
          <tbody><tr>
            <td><span class="swatch"></span></td>
            <td><input type="checkbox" checked aria-label="Visible"></td>
            <td><input type="checkbox" checked aria-label="Imprimible"></td>
            <td><input type="checkbox" aria-label="Bloqueada"></td>
            <td><input type="checkbox" checked aria-label="Flujo"></td>
            <td><input type="checkbox" aria-label="Contorno"></td>
            <td><input type="checkbox" aria-label="Seleccionable"></td>
            <td class="name">Fondo</td>
          </tr></tbody>
        </table>
      </div>
      <div class="layerbtns">
        <button aria-label="Añadir"><svg class="i20"><use href="#plus"/></svg></button>
        <button aria-label="Quitar"><svg class="i20"><use href="#minus"/></svg></button>
        <button aria-label="Duplicar"><svg class="i16"><use href="#copy"/></svg></button>
        <button aria-label="Subir"><svg class="i20"><use href="#up"/></svg></button>
        <button aria-label="Bajar"><svg class="i20"><use href="#down"/></svg></button>
      </div>
    </section>
    <section class="bookmarks">
      <div class="tabs tall">
        <div class="tab tree"><svg class="i16"><use href="#tree"/></svg></div>
        <div class="tab active"><svg class="i16"><use href="#bookmark"/></svg>Marcadores<svg class="i14"><use href="#x"/></svg></div>
        <div class="tab"><svg class="i14"><use href="#align"/></svg></div>
        <div class="tab"><svg class="i14"><use href="#indent"/></svg></div>
        <div class="dock"><span class="tri"></span><svg class="i14"><use href="#pin"/></svg></div>
      </div>
    </section>
  </aside>

  <section class="view">
    <svg class="hruler" id="hruler"></svg>
    <svg class="vruler" id="vruler"></svg>
    <div class="canvas" id="canvas"></div>
    <div class="scroll"><span class="thumb"></span><span class="end"></span></div>
  </section>

  <aside class="right">
    <div class="tabs">
      <div class="tab active"><svg class="i16"><use href="#gearframe"/></svg>Propiedades<svg class="i14"><use href="#x"/></svg></div>
      <div class="tab"><svg class="i16"><use href="#page"/></svg></div>
      <div class="tab"><svg class="i16"><use href="#textprops"/></svg></div>
      <div class="dock"><span class="tri"></span><svg class="i14"><use href="#pin"/></svg></div>
    </div>

    <h2><svg class="i14"><use href="#chev"/></svg><span>X, Y, <u>Z</u></span></h2>
    <div class="body xyz">
      <div class="coords">
        <label for="x"><u>X</u>:</label><span class="spin"><input id="x" value="0,000 mm"><i class="steps"></i></span>
        <label for="w"><u>W</u>:</label><span class="spin"><input id="w" value="0,353 mm"><i class="steps"></i></span>
        <button class="chain" aria-label="Proporción"><svg class="i16"><use href="#broken"/></svg></button>
        <label for="y"><u>Y</u>:</label><span class="spin"><input id="y" value="0,000 mm"><i class="steps"></i></span>
        <label for="h"><u>H</u>:</label><span class="spin"><input id="h" value="0,353 mm"><i class="steps"></i></span>
      </div>
      <div class="row">
        <label class="lead" for="rot"><svg class="i14"><use href="#angle"/></svg></label>
        <span class="spin w67"><input id="rot" value="0,0 °"><i class="steps"></i></span>
        <div class="tools"><button aria-label="Girar a la izquierda"><svg class="i14"><use href="#rotl"/></svg></button><button aria-label="Girar a la derecha"><svg class="i14"><use href="#rotr"/></svg></button></div>
        <div class="tools order"><button aria-label="Al fondo"><svg class="i14"><use href="#z1"/></svg></button><button aria-label="Bajar"><svg class="i14"><use href="#z2"/></svg></button><button aria-label="Subir"><svg class="i14"><use href="#z3"/></svg></button><button aria-label="Al frente"><svg class="i14"><use href="#z4"/></svg></button><span>Z:</span></div>
      </div>
      <div class="row ref">
        <svg class="i34"><use href="#refpoint"/></svg>
        <div class="tools flips"><button aria-label="Voltear horizontal"><svg class="i14"><use href="#fliph"/></svg></button><button aria-label="Voltear vertical"><svg class="i14"><use href="#flipv"/></svg></button></div>
        <div class="tools"><button aria-label="Bloquear"><svg class="i16"><use href="#unlock"/></svg></button><button aria-label="Bloquear tamaño"><svg class="i16"><use href="#locksize"/></svg></button></div>
        <div class="tools"><button aria-label="Agrupar"><svg class="i16"><use href="#group"/></svg></button><button aria-label="Desagrupar"><svg class="i16"><use href="#ungroup"/></svg></button></div>
      </div>
    </div>

    <h2><svg class="i14"><use href="#chev"/></svg><span><u>F</u>orma</span></h2>
    <div class="body forma">
      <div class="row">
        <button class="icon" aria-label="Forma"><svg class="i20"><use href="#square"/></svg></button>
        <button class="edit"><u>E</u>ditar...</button>
        <label for="corn" class="cornlabel"><svg class="i14"><use href="#corner"/></svg></label>
        <span class="spin w96"><input id="corn" value="0,00 mm"><i class="steps"></i></span>
      </div>
      <div class="tools">
        <button class="on" aria-label="Sin flujo"><svg class="i16"><use href="#flowoff"/></svg></button>
        <button aria-label="Flujo por marco"><svg class="i16"><use href="#flow"/></svg></button>
        <button aria-label="Flujo por caja"><svg class="i16"><use href="#flow2"/></svg></button>
        <button aria-label="Flujo por contorno"><svg class="i16"><use href="#flow3"/></svg></button>
        <button aria-label="Flujo por recorte"><svg class="i16"><use href="#flow4"/></svg></button>
      </div>
    </div>

    <h2><svg class="i14"><use href="#chev"/></svg><span><u>F</u>ill</span></h2>
    <div class="body fill">
      <div class="row">
        <button class="disc" aria-label="Color"></button>
        <svg class="i14 maskicon"><use href="#mask"/></svg>
        <button class="disc" aria-label="Máscara"></button>
        <span class="select w94"><select aria-label="Modo de relleno"><option>Normal</option></select></span>
        <div class="tools rules"><button aria-label="Par-impar"><svg class="i14"><use href="#ringmask"/></svg></button><button aria-label="No cero"><svg class="i14"><use href="#solidmask"/></svg></button></div>
      </div>
    </div>

    <h2><svg class="i14"><use href="#chev"/></svg><span><u>L</u>ínea</span></h2>
    <div class="body linea">
      <div class="row style">
        <svg class="i14"><use href="#linestyle"/></svg>
        <span class="select stylebox"><svg class="sample" viewBox="0 0 128 16"><path fill="#dededa" d="M0 0h128v16H0z"/><path stroke="#666" stroke-width="2" d="M8 15L122 0"/></svg><select aria-label="Estilo de línea"><option>No Style</option></select></span>
        <div class="tools"><button aria-label="Editar estilo"><svg class="i14"><use href="#pencil"/></svg></button></div>
        <div class="tools"><button aria-label="Añadir estilo"><svg class="i20"><use href="#plus"/></svg></button></div>
      </div>
      <div class="row">
        <button class="disc" aria-label="Color de línea"></button>
        <svg class="i14 maskicon"><use href="#mask"/></svg>
        <button class="disc" aria-label="Máscara de línea"></button>
        <span class="select w94"><select aria-label="Modo de línea"><option>Normal</option></select></span>
      </div>
      <div class="row width">
        <span class="spin w98"><input aria-label="Grosor" value="0,353 mm"><i class="steps"></i></span>
        <span class="select dash w98"><select aria-label="Tipo de trazo"><option></option></select></span>
      </div>
      <div class="row ends">
        <div class="tools"><button class="on" aria-label="Extremo plano"><svg class="i14"><use href="#cap1"/></svg></button><button aria-label="Extremo cuadrado"><svg class="i14"><use href="#cap2"/></svg></button><button aria-label="Extremo redondo"><svg class="i14"><use href="#cap3"/></svg></button></div>
        <div class="tools"><button class="on" aria-label="Unión en inglete"><svg class="i16"><use href="#join1"/></svg></button><button aria-label="Unión redonda"><svg class="i16"><use href="#join2"/></svg></button><button aria-label="Unión biselada"><svg class="i16"><use href="#join3"/></svg></button></div>
      </div>
    </div>

    <h2><svg class="i14"><use href="#chev"/></svg><span><u>D</u>rop Shadow</span></h2>
    <div class="body shadow">
      <div class="row">
        <button class="icon" aria-label="Activar sombra"><svg class="i20"><use href="#toggle"/></svg></button>
        <button class="disc drop" aria-label="Color de sombra"></button>
        <span class="select w94"><select aria-label="Modo de sombra"><option>Normal</option></select></span>
        <svg class="i14 erase"><use href="#shadow"/></svg>
      </div>
      <div class="shgrid">
        <label for="sx">X:</label><span class="spin"><input id="sx" value="1,764 mm"><i class="steps"></i></span>
        <label for="sr">Radio:</label><span class="spin"><input id="sr" value="1,764 mm"><i class="steps"></i></span>
        <label for="sy">Y:</label><span class="spin"><input id="sy" value="1,764 mm"><i class="steps"></i></span>
        <label for="so">Opacidad:</label><div class="row"><span class="spin w74"><input id="so" value="100 %"><i class="steps"></i></span><svg class="i14"><use href="#knock"/></svg></div>
      </div>
    </div>

    <h2><svg class="i14"><use href="#chev"/></svg><span><u>A</u>tributos</span></h2>
    <div class="body attrs">
      <div class="row">
        <label for="attr"><svg class="i14"><use href="#tag"/></svg></label>
        <input id="attr" value="GEOM_SYNC_">
        <div class="tools printer"><button aria-label="Imprimible"><svg class="i16"><use href="#print"/></svg></button></div>
        <div class="tools marks"><button aria-label="Marcador PDF"><svg class="i14"><use href="#bookmark"/></svg></button></div>
        <div class="tools"><button aria-label="Anotación"><svg class="i16"><use href="#note"/></svg></button><button aria-label="Opciones"><svg class="i14"><use href="#gear"/></svg></button></div>
      </div>
    </div>
  </aside>
</main>

<footer class="statusbar">
  <span class="spin w96"><input aria-label="Zoom" value="25,00 %"><i class="steps"></i></span>
  <div class="btns zooms"><button aria-label="Alejar"><svg class="i16"><use href="#zoomout"/></svg></button><button aria-label="100 %"><svg class="i16"><use href="#zoomone"/></svg></button><button aria-label="Acercar"><svg class="i16"><use href="#zoomin"/></svg></button></div>
  <div class="btns"><button aria-label="Primera"><svg class="i16"><use href="#first"/></svg></button><button aria-label="Anterior"><svg class="i16"><use href="#prev"/></svg></button></div>
  <span class="flat pg"><select id="pg"><option>2</option></select></span>
  <label for="pg">de 5</label>
  <div class="btns"><button aria-label="Siguiente"><svg class="i16"><use href="#next"/></svg></button><button aria-label="Última"><svg class="i16"><use href="#last"/></svg></button></div>
  <span class="flat layer"><span class="swatch"></span><select aria-label="Capa"><option>Fondo</option></select></span>
  <div class="pos"><span>X:</span><span>830,000</span><span class="second">Y:</span><span>156,056</span>
    <span class="flat unit"><select aria-label="Unidad"><option>mm</option></select></span>
    <span class="msg"></span></div>
</footer>
<script src="app.js"></script>
</body>
</html>
```
FILE: styles.css
```css
* { box-sizing: border-box; }

:root {
  --panel: #3a3a3a;
  --light: #464648;
  --head: #2e2e30;
  --tabbar: #262628;
  --active: #161617;
  --accent: #7286aa;
  --line: #6a6a6e;
  --fg: #e4e4e0;
}

body {
  margin: 0;
  height: 100vh;
  display: flex;
  flex-direction: column;
  overflow: hidden;
  background: var(--panel);
  color: var(--fg);
  font: 12px/16px "Noto Sans", "Open Sans", sans-serif;
}

button, input, select { font: inherit; color: inherit; }
button { border: 0; padding: 0; background: none; display: grid; place-items: center; }
u { text-underline-offset: 2px; }

/* icons */
.sprite { display: none; }
svg { flex: none; fill: currentColor; display: block; }
.s { fill: none; stroke: currentColor; stroke-width: 1.5px; }
.s2 { fill: none; stroke: currentColor; stroke-width: 2px; }
.b { fill: #26465f; stroke: #4aa3dc; stroke-width: 1.5px; }
.g { fill: none; stroke: #1faa2e; stroke-width: 1.5px; }
.i14 { width: 14px; height: 14px; }
.i16 { width: 16px; height: 16px; }
.i18 { width: 18px; height: 18px; }
.i20 { width: 20px; height: 20px; }
.i34 { width: 34px; height: 34px; }

/* window chrome */
.titlebar {
  height: 31px;
  flex: none;
  display: flex;
  align-items: center;
  gap: 6px;
  padding-left: 9px;
  background: #1c1c20;
  color: #8c8c8c;
}
.titlebar h1 { margin: 0; font-size: 12px; font-weight: 400; }
.wincontrols { margin-left: auto; display: flex; }
.wincontrols button { width: 46px; height: 30px; }
.titlebar .i20 { color: #7a7a7a; }

.menubar {
  height: 21px;
  flex: none;
  display: flex;
  align-items: center;
  gap: 14px;
  padding-left: 2px;
  background: #454547;
}
.menubar > .i16 { margin-right: -5px; }
.menubar button { display: inline-block; }
.subcontrols { margin-left: auto; display: flex; gap: 4px; padding-right: 2px; color: #8a8a8a; }
.subcontrols button { border: 1px solid #6a6a6a; width: 16px; height: 16px; display: grid; }

.toolbar {
  height: 27px;
  flex: none;
  display: flex;
  align-items: center;
  padding-left: 1px;
  border-bottom: 1px solid #26262a;
  background: #3a3a38;
  color: #f4f4f4;
}
.toolbar button { width: 28px; height: 26px; flex: none; }
.toolbar .on { background: linear-gradient(var(--accent), var(--accent)) center / 25px 25px no-repeat; }
.toolbar .wide { margin-left: 2px; }
.toolbar .apart { margin-left: 10px; }
.toolbar text { font-family: "Noto Sans", sans-serif; }
.handle {
  width: 5px;
  height: 19px;
  flex: none;
  background: radial-gradient(circle, #8c8c8c 1px, transparent 1px) 0 0 / 2px 3px;
}

/* docks */
.workspace {
  flex: 1;
  min-height: 0;
  display: grid;
  grid-template-columns: 353px minmax(0, 1fr) 418px;
}
.left { display: flex; flex-direction: column; min-height: 0; }
.tabs { display: flex; height: 25px; background: var(--tabbar); color: #f2f2f2; flex: none; }
.tabs.tall { height: 27px; }
.tab { display: flex; align-items: center; justify-content: center; width: 40px; }
.tab.active { background: var(--active); font-weight: 700; gap: 7px; width: auto; padding: 0 5px 0 10px; }
.tab.tree { justify-content: flex-start; padding-left: 9px; }
.dock {
  margin-left: auto;
  width: 38px;
  display: flex;
  align-items: center;
  justify-content: space-between;
  padding: 0 3px 0 4px;
  background: #3c3c3a;
}
.tri { border: 5px solid transparent; border-top-color: #fff; border-bottom: 0; }

.layers { height: 335px; display: flex; flex-direction: column; flex: none; }
.blend { display: flex; align-items: center; gap: 3px; height: 27px; padding: 0 4px; }
.blend label { font-size: 13px; line-height: 20px; }
.blend .spin { margin-left: auto; }
.layerlist { flex: 1; margin: 2px 4px 0 5px; background: var(--light); }
table { border-collapse: collapse; width: 100%; table-layout: fixed; }
th { height: 20px; width: 24px; padding: 0; font-weight: 400; font-size: 13px; background: #3c3c3e; border-right: 1px solid #555; border-bottom: 1px solid #2c2c2c; }
th.color { width: 22px; }
th svg { margin: auto; color: #fff; }
th.name, td.name { width: auto; border-right: 0; }
td { height: 30px; padding: 0; border-right: 1px solid #505052; }
td.name { background: var(--accent); padding-left: 3px; font-size: 13px; color: #fff; }
td input { appearance: none; display: block; width: 18px; height: 18px; margin: auto; border: 1px solid #66666a; border-radius: 4px; }
td input:checked { background: var(--accent); }
.swatch { display: block; width: 16px; height: 12px; background: #000; margin: auto; }
.layerbtns { display: flex; gap: 31px; height: 26px; align-items: center; justify-content: flex-end; padding-right: 17px; color: #f4f4f4; }
.layerbtns button { width: 20px; height: 20px; }
.bookmarks { flex: 1; background: var(--light); }
.bookmarks .active { gap: 6px; }

/* document view */
.view {
  display: grid;
  grid-template: 25px minmax(0, 1fr) / 27px minmax(0, 1fr) 12px;
  border-left: 1px solid #242426;
  min-width: 0;
  min-height: 0;
}
.hruler { grid-column: 1 / 3; width: 100%; height: 25px; }
.vruler { grid-column: 1; width: 27px; height: 100%; }
.vruler, .hruler { fill: #d4d4d0; font-size: 12px; overflow: hidden; }
.canvas { position: relative; overflow: hidden; background: #f0f0ee; margin-left: -1px; }
.scroll { grid-column: 3; grid-row: 1 / 3; background: #2a2a2c; display: flex; flex-direction: column; padding-top: 8px; }
.thumb { height: 61%; width: 10px; border-radius: 5px; background: var(--accent); }
.end { margin-top: auto; width: 10px; height: 12px; border: 2px solid #151515; background: #555; }

.page {
  position: absolute;
  left: 309px;
  width: 195px;
  height: 276px;
  background: #fdfdfd;
  border: 1px solid #111;
  border-right-width: 2px;
  border-bottom-width: 2px;
  padding: 12px;
}
.page.current { border-color: #b02a2a; }
.frame {
  height: 250px;
  width: 169px;
  border: 1px solid #5a0c14;
  padding: 1px 0 3px;
  display: flex;
  flex-direction: column;
  color: #30302e;
  font: 4px/4px "Liberation Sans", sans-serif;
  white-space: nowrap;
}
.frame div { flex: 1; }
.frame b { color: #a01020; }
.wire { position: absolute; left: 402px; width: 9px; height: 40px; fill: #000; }

/* property panel */
.right { border-left: 1px solid #242426; min-width: 0; }
.right > .tabs .active { padding: 0 6px; gap: 7px; width: 131px; justify-content: flex-start; }
.right > .tabs { padding-left: 2px; }
h2 {
  margin: 0;
  height: 26px;
  display: flex;
  align-items: center;
  gap: 9px;
  padding-left: 7px;
  background: var(--head);
  font-size: 12px;
  font-weight: 700;
}
.body { padding-left: 7px; display: flex; flex-direction: column; }
.row { display: flex; align-items: center; }
.tools { display: flex; gap: 3px; align-items: center; }
.tools button { width: 20px; height: 20px; }
.tools .on { background: var(--accent); }
.coords { display: grid; grid-template-columns: 24px 131px 31px 126px 20px; gap: 10px 5px; }
.coords label, .shgrid label { text-align: right; line-height: 20px; }
.chain { grid-column: 5; grid-row: 1 / 3; }
.xyz { padding-top: 9px; gap: 10px; height: 157px; }
.lead { width: 24px; display: flex; justify-content: flex-end; margin-right: 5px; }
.xyz .tools { margin-left: 4px; }
.xyz .order { margin-left: 19px; }
.ref { padding: 5px 0 0 8px; }
.ref .tools.flips { margin-left: 23px; }
.ref .tools + .tools { margin-left: 15px; }

.forma { padding-top: 8px; gap: 7px; height: 66px; }
.icon { width: 20px; height: 20px; }
.edit { display: inline-block; margin-left: 8px; }
.cornlabel { margin: 0 5px 0 26px; }
.fill { height: 42px; justify-content: center; }
.disc { width: 26px; height: 26px; flex: none; border: 1px solid #9a9a98; border-radius: 50%; background: #343434; }
.fill .disc:first-child, .linea .disc:first-child { margin-left: 1px; }
.maskicon { margin: 0 5px 0 17px; }
.row > .disc + .select { margin-left: 4px; }
.rules { margin-left: 17px; }
.linea { padding-top: 9px; gap: 8px; height: 128px; }
.style > svg { margin: 0 5px 0 2px; }
.style .tools { margin-left: 4px; }
.style .tools + .tools { margin-left: 10px; }
.stylebox { width: 198px; padding: 1px; }
.select.stylebox select { padding-left: 5px; }
.sample { width: 128px; height: 16px; }
.width { gap: 17px; }
.ends { gap: 15px; }
.shadow { padding-top: 7px; gap: 11px; height: 102px; }
.drop { margin-left: 9px; position: relative; }
.drop::after { content: ""; position: absolute; right: -1px; bottom: -1px; width: 12px; height: 12px; border: 1px solid #aaa; border-radius: 50%; background: conic-gradient(#666 55%, #ccc 0 75%, #777 0); }
.erase { margin-left: 15px; }
.shgrid { display: grid; grid-template-columns: 24px 96px 71px 97px; gap: 10px 5px; }
.shgrid .row { gap: 7px; }
.shgrid label { padding-right: 1px; }
.attrs { padding-top: 8px; }
.attrs label { margin: 0 5px 0 2px; }
.attrs input { width: 110px; height: 23px; padding: 0 3px; border: 2px solid #6f88b4; background: #34435c; outline: 0; }
.printer { margin-left: 14px; }
.marks { margin: 0 11px 0 34px; }

/* form controls */
.spin { display: flex; height: 20px; border: 1px solid #2e2e2e; background: #3b3b39; }
.spin input { flex: 1; min-width: 0; border: 0; background: none; padding: 0 4px; outline: 0; }
.steps { width: 13px; flex: none; background: #58585a; display: flex; flex-direction: column; align-items: center; justify-content: center; gap: 3px; }
.steps::before, .steps::after { content: ""; border: 4px solid transparent; }
.steps::before { border-bottom-color: #b4b4b4; border-top: 0; }
.steps::after { border-top-color: #b4b4b4; border-bottom: 0; }
.select { position: relative; display: flex; height: 20px; border: 1px solid #6c6c74; border-right: 2px solid #1c1c1c; border-bottom-color: #55555a; background: #444446; }
.select::after { content: ""; position: absolute; right: 3px; top: 7px; border: 4px solid transparent; border-top-color: #aaa; border-bottom: 0; }
.select select, .flat select { appearance: none; border: 0; background: none; flex: 1; min-width: 0; padding: 0 14px 0 1px; outline: 0; }
.blend .select select { font-size: 13px; }
.select.dash select { background: linear-gradient(#dededa, #dededa) 2px 8px / 72px 3px no-repeat; }
.w67 { width: 67px; }
.w70 { width: 70px; }
.w74 { width: 74px; }
.w94 { width: 94px; }
.w96 { width: 96px; }
.w98 { width: 98px; }

/* status bar */
.statusbar { height: 37px; flex: none; display: flex; align-items: center; padding-left: 37.5%; background: var(--panel); border-top: 1px solid #303032; }
.statusbar .spin { border-color: #333; }
.statusbar .spin input { padding: 0 6px; }
.btns { display: flex; }
.btns button { width: 31px; height: 32px; background: #4a4a48; color: #f4f4f4; }
.zooms { gap: 2px; margin: 0 5px 0 4px; }
.flat { display: flex; align-items: center; position: relative; height: 22px; border: 1px solid #77777c; border-radius: 4px; background: #434345; }
.flat::after { content: ""; position: absolute; right: 0; top: 0; bottom: 0; width: 16px; border-left: 1px solid #a0a0a0; }
.flat::before { content: ""; position: absolute; right: 4px; top: 8px; border: 4px solid transparent; border-top-color: #222; border-bottom: 0; }
.pg { width: 71px; margin: 0 6px 0 1px; }
.pg select { text-align: center; text-align-last: center; }
.flat.pg select { padding-right: 18px; }
.statusbar label { margin-right: 1px; }
.layer { width: 122px; margin-left: 5px; }
.layer .swatch { margin: 0 4px 0 1px; height: 13px; flex: none; }
.pos { margin-left: auto; display: flex; align-items: center; gap: 7px; padding-right: 23px; }
.second { margin-left: 5px; }
.unit { width: 54px; margin-left: 4px; }
.msg { width: 100px; height: 27px; border: 1px solid #66666e; border-radius: 4px; background: #434345; }
```
FILE: app.js
```js
const NS = "http://www.w3.org/2000/svg";
const STEP = 9.24; // pixels for 10 mm at the current zoom

function add(parent, name, attrs, text) {
  const el = document.createElementNS(NS, name);
  for (const k in attrs) el.setAttribute(k, attrs[k]);
  if (text !== undefined) el.textContent = text;
  parent.appendChild(el);
  return el;
}

const h = document.getElementById("hruler");
const v = document.getElementById("vruler");

// Horizontal ruler: zero lies 335 px from the ruler's left edge
for (let n = -33; n <= 86; n++) {
  const x = Math.round(335 + n * STEP);
  if (x < 27) continue;
  const len = n % 10 === 0 ? 12 : n % 5 === 0 ? 8 : 4;
  add(h, "rect", { x, y: 25 - len, width: 1, height: len });
  if (n % 10 === 0) add(h, "text", { x: x + 2, y: 13 }, n * 10);
}
add(h, "path", { d: "M1100 1h4l-1 3v21h-1V4z", fill: "#e0604c" });

// Vertical ruler: zero lies 398 px below its top, digits are stacked
for (let n = -43; n <= 58; n++) {
  const y = Math.round(398 + n * STEP);
  if (y < 0) continue;
  const len = n % 10 === 0 ? 12 : n % 5 === 0 ? 8 : 4;
  add(v, "rect", { x: 26 - len, y, width: len, height: 1 });
  if (n % 10 === 0) String(n * 10).split("").forEach((c, i) =>
    add(v, "text", { x: 9, y: y + 9 + i * 12, "text-anchor": "middle" }, c));
}
add(v, "path", { d: "M2 541l3 1h21v1H5l-3 1z", fill: "#e0604c" });

const lorem = [
  "Lorem ipsum dolor sit amet, consectetuer adipiscing elit. Ut a sapien. Aliquam aliquet purus",
  "molestie dolor. Integer quis eros ut erat posuere dictum. Curabitur dignissim. Integer orci. Fusce",
  "vulputate lacus at ipsum. Quisque in libero nec mi laoreet volutpat. Aliquam eros pede,",
  "scelerisque quis, tristique cursus, placerat convallis, velit. Nam condimentum. Nulla ut mauris.",
  "Curabitur adipiscing, mauris non dictum aliquam, arcu risus dapibus diam, nec sollicitudin quam",
  "erat quis ligula. Aenean massa nulla, volutpat eu, accumsan et, fringilla eget, odio. Nulla placerat",
  "porta justo. Nulla vitae turpis. Praesent lacus.¶"];
const vestibulum = [
  "Vestibulum ante ipsum primis in faucibus orci luctus et ultrices posuere cubilia Curae; Aliquam",
  "ultricies lacus eu dui. Duis viverra risus at eros. Aenean odio dolor, tristique quis, commodo id,",
  "posuere sit amet, dui. Pellentesque velit. Aliquam erat volutpat. Duis sagittis nibh sed justo. Sed",
  "ultrices nisl sed pede. Sed tempor lorem in leo. Integer gravida tincidunt nunc. Vivamus ut quam",
  "vel ligula tristique condimentum. Proin facilisis. Aliquam sagittis lacinia mi. Donec sagittis luctus",
  "dui. Maecenas quam ante, vestibulum auctor, blandit in, iaculis in, velit. Aliquam at ligula. Nam a",
  "tellus. Aliquam eu nulla at turpis vulputate hendrerit. Proin at diam. Curabitur euismod.¶"];
const facilisi = [
  "Nulla facilisi. Nam varius ante dignissim arcu. Suspendisse molestie dignissim neque.",
  "Suspendisse leo ipsum, rutrum cursus, malesuada id, dapibus sed, urna. Fusce sollicitudin",
  "laoreet diam. Mauris eu quam eget nulla fermentum adipiscing. In hac habitasse platea dictumst.",
  "Morbi ut odio vitae eros luctus luctus. Ut diam. Phasellus ullamcorper arcu vitae wisi.",
  "Pellentesque urna odio, varius eget, dignissim quis, vehicula placerat, nunc. Ut nec metus quis",
  "nulla posuere eleifend.¶"];
const sociis = [
  "Cum sociis natoque penatibus et magnis dis parturient montes, nascetur ridiculus mus.",
  "Maecenas tortor metus, pellentesque nec, vehicula vitae, suscipit sed, quam. Aenean",
  "scelerisque sodales tortor. Sed purus. Curabitur turpis est, bibendum tristique, porttitor tempor,",
  "pulvinar vitae, tortor. Nullam malesuada dapibus orci. Vivamus aliquet tempus velit. Curabitur",
  "interdum posuere risus. Duis egestas, ipsum sit amet molestie tincidunt, ligula libero pretium",
  "risus, non faucibus tellus felis mattis sapien. Ut eu velit at massa auctor mattis. Nam tristique",
  "velit quis nisl.¶"];
const iaculis = [
  "Nam iaculis blandit purus. Mauris odio nibh, hendrerit id, cursus vel, sagittis a, dolor. Nullam",
  "turpis lacus, ultrices vel, sagittis vitae, dapibus vel, elit. Suspendisse auctor, sapien et suscipit",
  "tempor, turpis enim consequat sem, eu dictum nunc lorem at massa. Pellentesque scelerisque",
  "purus. Etiam sed enim. Maecenas sed tortor id turpis consequat consequat. Curabitur fringilla.",
  "Sed risus wisi, dictum a, sagittis nec, luctus ac, neque. Lorem ipsum dolor sit amet, consectetuer",
  "adipiscing elit. Sed nibh neque, aliquam ut, sagittis id, gravida et, est. Aenean consectetuer",
  "pretium enim. Aenean tellus quam, condimentum a, adipiscing et, lacinia vel, ante. Praesent",
  "faucibus dignissim enim. Aliquam tincidunt. Mauris leo ante, condimentum eget, vestibulum sit",
  "amet, fringilla eget, diam. Nam ultricies ullamcorper nibh. Etiam neque. Ut posuere laoreet pede.¶"];
const nibh = [
  "Suspendisse nibh. Nunc vulputate leo id urna. Donec dictum. Lorem ipsum dolor sit amet,",
  "consectetuer adipiscing elit. Lorem ipsum dolor sit amet, consectetuer adipiscing elit.",
  "Suspendisse dictum, magna consectetuer hendrerit volutpat, sapien felis faucibus justo, ac",
  "vehicula risus lacus quis ante. Nam commodo, augue ac faucibus imperdiet, diam sodales",
  "tellus, eu pharetra orci sem et velit. Duis id elit. Donec et leo nec felis porttitor sagittis",
  "leo. Sed vel justo. Sed ut tellus et mi mollis venenatis. Nam convallis magna ut urna. Lorem",
  "ac, faucibus sed, lorem. In hac habitasse platea dictumst. Integer vitae sapien id augue",
  "scelerisque quis, sapien. Suspendisse sit amet neque at purus in lacus aliquam sed,",
  "mi. Cras aliquam sed nunc. Duis sollicitudin nisl.¶"];
const pellentesque = [
  "Lorem ipsum dolor sit amet, consectetuer adipiscing elit. Pellentesque habitant morbi tristique",
  "molestie tellus. Integer quis eros ut erat posuere dictum. Curabitur dignissim. Integer in felis.",
  "gravida. Class aptent taciti sociosqu ad litora torquent per conubia nostra, per inceptos. Vivamus",
  "neque pulvinar nisl. Cras arcu velit, sagittis ut, elementum eget, suscipit sit amet, ante. Maecenas",
  "sed nisl at arcu adipiscing ultricies. In suscipit, mi ut dictum tempus, quam lacus nulla,",
  "lectus quis rutrum turpis diam a justo. Duis et mauris non leo egestas blandit. Pellentesque",
  "rutrum, nulla et ullamcorper iaculis, mi mi tincidunt ante, ac lacinia nisi mauris a enim. Vivamus",
  "luctus. Donec sit amet tortor. Nunc nisl. Etiam vitae sapien. Mauris nonummy accumsan",
  "mollis. Nulla et arcu ac est laoreet mattis, velit lacus facilisis elit, vitae congue tellus id est.",
  "aliquet, non fringilla odio venenatis. Pellentesque vestibulum, sem ut tempus sagittis,",
  "ligula. Curabitur vehicula facilisis.¶"];

const pages = [
  [lorem, vestibulum, facilisi, sociis, lorem, iaculis, sociis],
  [nibh, nibh, pellentesque, lorem, vestibulum, facilisi, sociis.slice(0, 1)],
  [sociis.slice(1), lorem, iaculis, sociis, nibh, nibh, lorem]
].map(list => list.flat());

const canvas = document.getElementById("canvas");
pages.forEach((lines, i) => {
  const page = document.createElement("article");
  page.className = i === 1 ? "page current" : "page";
  page.style.top = 111 + i * 288 + "px";
  const frame = document.createElement("div");
  frame.className = "frame";
  lines.slice(0, 50).forEach(t => {
    const line = document.createElement("div");
    line.textContent = t.replace("¶", "");
    if (t.endsWith("¶")) {
      const mark = document.createElement("b");
      mark.textContent = "¶";
      line.appendChild(mark);
    }
    frame.appendChild(line);
  });
  page.appendChild(frame);
  canvas.appendChild(page);
});

// Arrows that chain one text frame to the next
[373, 661].forEach(top => {
  const wire = document.createElementNS(NS, "svg");
  wire.setAttribute("class", "wire");
  wire.style.top = top + "px";
  add(wire, "path", { d: "M4 0h1v31l4-2-4 11h-1L0 29l4 2z" });
  canvas.appendChild(wire);
});
```
